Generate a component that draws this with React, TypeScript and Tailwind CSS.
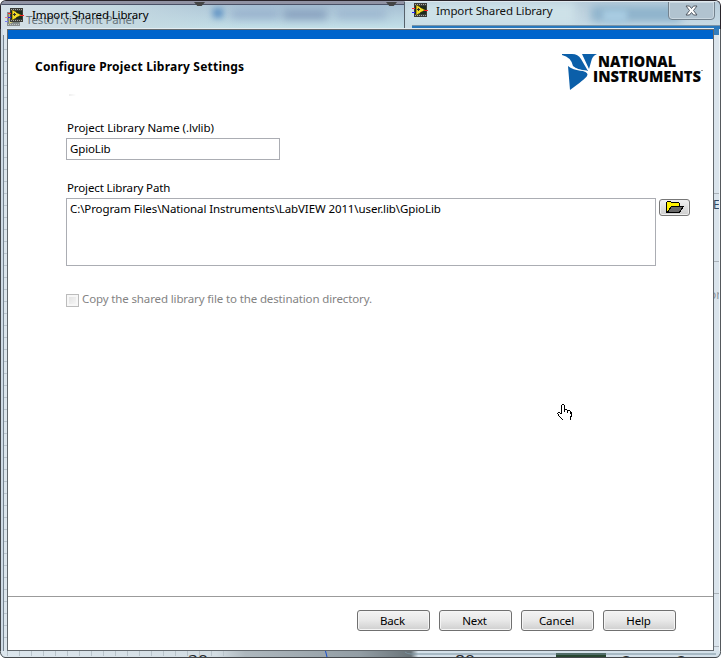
import type { ReactNode } from "react";

const font = "font-['Noto_Sans','Open_Sans',sans-serif] text-[11.5px] leading-4 tracking-[-0.13px]";

function LabviewIcon({ className = "" }: { className?: string }) {
  return (
    <svg className={className} width="17" height="16" viewBox="0 0 17 16" shapeRendering="crispEdges">
      <rect x="3" y="1" width="13" height="14" fill="#3c3c38" />
      <path d="M4 2.5H16M4 13.5H16" stroke="#a9aba4" strokeDasharray="1 1" />
      <rect x="4" y="4" width="11" height="8" fill="#1d2c1d" />
      <path d="M5 3V13L14 8Z" fill="#f0dc2a" stroke="#8d7500" strokeWidth=".6" />
      <path d="M1 6.5H4M13 8.5H17" stroke="#f22" />
      <path d="M1 10.5H4" stroke="#22f" />
      <path d="M6 7.5H9M7.5 6V9" stroke="#333" />
    </svg>
  );
}

function Logo() {
  return (
    <svg className="absolute left-[561px] top-[52px]" width="144" height="40" viewBox="0 0 144 40">
      <g fill="#0b5fa9">
        <path d="M1 2H11Q17 2 20 7L27 19Q16 18 12 14Q10 5 1 3Z" />
        <path d="M7 14Q11 18 22 19Q28 21 26 24Q24 27 9 38Z" />
        <path d="M21 2H36Q31 4 30 10L28 17Z" />
      </g>
      <path d="M10 14Q14 18 26 19" stroke="#fff" strokeWidth=".7" fill="none" />
      <g fill="#050505" fontFamily="'Open Sans', 'Noto Sans', sans-serif" fontWeight="800" fontSize="16.5" letterSpacing="0">
        <text x="37" y="15" textLength="78" lengthAdjust="spacingAndGlyphs">NATIONAL</text>
        <text x="32" y="29.5" textLength="108" lengthAdjust="spacingAndGlyphs">INSTRUMENTS</text>
      </g>
      <rect x="140" y="18" width="2" height="1" fill="#999" />
    </svg>
  );
}

function FolderIcon() {
  return (
    <svg width="20" height="13" viewBox="0 0 20 13" shapeRendering="crispEdges">
      <path d="M1 1H6V2H14V5H6L2 12H1Z" fill="#fff200" />
      <path d="M1.5 1V12M2 .5H6M6.5 1V2M7 1.5H14M14.5 2V5" stroke="#000" fill="none" />
      <path d="M6 5H19L15 12H2Z" fill="#696969" />
      <path d="M6 5.5H19M18 6L14 12M6 6L2 12M2 11.5H15" stroke="#000" fill="none" />
    </svg>
  );
}

function DialogButton({ children }: { children: ReactNode }) {
  return (
    <button className="flex h-[21px] w-[73px] items-center justify-center rounded-[3px] border border-[#707070] bg-linear-to-b from-[#f3f3f3] from-0% via-[#e8e8e8] via-50% to-[#cfcfcf] pr-[2px] pt-px shadow-[inset_0_0_0_1px_#f5f5f5]">
      {children}
    </button>
  );
}

function TitleBar() {
  return (
    <header className="relative h-[29px] overflow-hidden rounded-t-[6px] border-x border-t border-[#29242a] bg-linear-to-b from-[#a2bad0] to-[#c4e1e9]">
      <div className="absolute inset-x-0 bottom-0 top-[4px] bg-linear-to-r from-[#d5e0e7] via-[#c5d9e1] via-15% to-transparent to-35%" />
      <div className="absolute left-[212px] top-[7px] h-[10px] w-[10px] bg-[#5f93c4] blur-[3px]" />
      <div className="absolute left-[230px] top-[9px] h-[8px] w-[48px] bg-[#94aecb] blur-[4px]" />
      <div className="absolute left-[282px] top-[9px] h-[9px] w-[44px] bg-[#839cbb] blur-[4px]" />
      <div className="absolute left-[335px] top-[9px] h-[8px] w-[50px] bg-[#9ab4ce] blur-[4px]" />
      <div className="absolute inset-x-0 top-0 h-[4px] border-b border-[#4a5166] bg-[#9193a4]" />
      <div className="absolute left-[193px] top-[1px] h-[4px] w-[11px] bg-[#444] [clip-path:polygon(0_0,100%_0,70%_100%,30%_100%)]" />
      <div className="absolute left-[385px] top-[1px] h-[4px] w-[11px] bg-[#444] [clip-path:polygon(0_0,100%_0,70%_100%,30%_100%)]" />
      <LabviewIcon className="absolute left-[3px] top-[10px] opacity-50" />
      <span className="absolute left-[25px] top-[11px] whitespace-nowrap text-[#68767d]">Test01.vi Front Panel</span>
      <LabviewIcon className="absolute left-[6px] top-[6px]" />
      <span className="absolute left-[31px] top-[6px] whitespace-nowrap text-black">Import Shared Library</span>

      <div className="absolute left-[403px] right-0 top-0 h-[28px] overflow-hidden border-l border-t border-l-[#56616b] border-t-[#dfe8ee] bg-linear-to-b from-[#b8ccda] to-[#c8dce6]">
        <div className="absolute left-0 top-0 h-6 w-[170px] bg-[#cde1e8] blur-[4px]" />
        <div className="absolute left-[186px] top-1 h-4 w-[90px] bg-[#8eb3cc] blur-[4px]" />
        <div className="absolute left-[198px] top-2 h-3 w-6 bg-[#a9cce2] blur-[3px]" />
        <div className="absolute bottom-0 left-[7px] right-0 h-[4px] border-t border-[#7d94a6] bg-[#2778bd]" />
        <LabviewIcon className="absolute left-[6px] top-0" />
        <span className="absolute left-[31px] top-[1px] whitespace-nowrap text-[#111]">Import Shared Library</span>
        <div className="absolute -top-px right-[5px] flex h-[19px] w-[47px] items-center justify-center rounded-b-[4px] border border-[#73828e] bg-[#b1c3d0] shadow-[inset_0_0_0_1px_#cbd8e1]">
          <svg width="13" height="11" viewBox="0 0 13 11">
            <path d="M1 1H4.5L6.5 3.5L8.5 1H12L8.5 5.5L12 10H8.5L6.5 7.5L4.5 10H1L4.5 5.5Z" fill="#fff" stroke="#505863" />
          </svg>
        </div>
      </div>
      <div className="absolute bottom-0 left-[6px] right-[6px] h-px bg-[#e3edf2]" />
    </header>
  );
}

function SideFrame() {
  return (
    <svg className="shrink-0" width="7" height="622" shapeRendering="crispEdges">
      <rect width="7" height="622" fill="#dce5ec" />
      <rect width="1" height="622" fill="#44474b" />
      <rect x="1" width="2" height="622" fill="#cfdbe6" />
      <rect x="3" y="6" width="1" height="616" fill="#75838f" />
      <path d="M5.5 20V620" stroke="#bcc6ce" strokeWidth="3" strokeDasharray="1 11" />
    </svg>
  );
}

function RightFrame() {
  return (
    <svg className="shrink-0" width="7" height="622">
      <rect width="7" height="622" fill="#dae4ec" />
      <rect width="7" height="6" fill="#347dbd" />
      <path d="M0 164.5H6M0 232.5H6M0 564.5H6M0 617.5H6" stroke="#aab2b9" />
      <text x="-1" y="180" fontSize="12" fill="#304964">EV</text>
      <text x="-5" y="270" fontSize="12" fill="#8b969e">or</text>
      <rect x="5" width="1" height="622" fill="#eef4f7" />
      <rect x="6" width="1" height="622" fill="#55595d" />
    </svg>
  );
}

function BottomFrame() {
  return (
    <svg className="block" width="721" height="7" viewBox="0 0 721 7">
      <defs>
        <linearGradient id="glass">
          <stop offset="0" stopColor="#dce6ed" />
          <stop offset=".3" stopColor="#d3dde3" />
          <stop offset=".34" stopColor="#aeb8be" />
          <stop offset=".5" stopColor="#929da4" />
          <stop offset=".57" stopColor="#697378" />
          <stop offset=".58" stopColor="#d4e1ea" />
          <stop offset="1" stopColor="#d4e1ea" />
        </linearGradient>
      </defs>
      <path d="M0 0H721V3Q720 7 716 7H5Q1 6 0 3Z" fill="url(#glass)" />
      <path d="M7 2.5H230" stroke="#b8c3ca" strokeWidth="5" strokeDasharray="1 11" />
      <path d="M325.5 0L327 6" stroke="#174ed0" />
      <rect x="556" y="2" width="50" height="4" fill="#274630" />
      <path d="M405 1Q407 3 411 3H716" stroke="#7b929f" fill="none" />
      <g fill="#272b2e" fontSize="15" letterSpacing="0">
        <text x="188" y="14" textLength="20" lengthAdjust="spacingAndGlyphs">20</text>
        <text x="455" y="14" textLength="20" lengthAdjust="spacingAndGlyphs">80</text>
        <text x="620" y="15">C</text>
        <text x="675" y="15">C</text>
      </g>
      <path d="M0 0Q1 6 5 6.5H716Q720 6 721 0" fill="none" stroke="#45494d" />
    </svg>
  );
}

function HandCursor() {
  return (
    <svg className="absolute left-[556px] top-[403px]" width="18" height="19" viewBox="0 0 18 19" shapeRendering="crispEdges">
      <path d="M6 2H8V8H10V9H12V10H14V11H15V15H14V17H7V15H5V13H3V10H5V11H6Z" fill="#fff" />
      <path d="M6 1H8V2H6ZM5 2H6V11H5ZM8 2H9V9H8ZM9 6H11V7H9ZM11 7H12V10H11ZM12 7H14V8H12ZM14 8H15V11H14ZM15 9H16V14H15ZM14 13H15V17H14ZM2 9H4V10H2ZM1 10H2V11H1ZM2 11H3V13H2ZM4 10H5V11H4ZM3 13H4V14H3ZM4 14H5V15H4ZM5 15H6V16H5ZM6 16H7V17H6Z" fill="#000" />
    </svg>
  );
}

export default function App() {
  return (
    <div className={`relative h-[658px] w-[721px] overflow-hidden bg-white text-black ${font}`}>
      <TitleBar />
      <div className="flex h-[622px]">
        <SideFrame />
        <main className="flex w-[707px] shrink-0 flex-col border border-[#62686d] bg-white">
          <div className="h-[9px] shrink-0 bg-[#0064cc]" />
          <div className="flex h-[557px] shrink-0 flex-col items-start pl-[58px]">
            <h1 className="-ml-[31px] mt-[19px] h-4 whitespace-nowrap text-[12px] font-bold leading-[18px] tracking-[0.21px]">Configure Project Library Settings</h1>
            <div className="ml-[3px] mt-[20px] h-[2px] w-[7px] bg-linear-to-r from-[#eeeeee] to-white" />
            <label className="ml-px mt-[24px] h-4 whitespace-nowrap tracking-[-0.05px]">Project Library Name (.lvlib)</label>
            <div className="mt-[2px] flex h-[22px] w-[214px] items-center border border-[#abadb3] pl-[3px]">GpioLib</div>
            <label className="ml-px mt-[20px] h-4 whitespace-nowrap tracking-[-0.13px]">Project Library Path</label>
            <div className="mt-[2px] flex gap-[3px]">
              <div className="h-[68px] w-[590px] whitespace-nowrap border border-[#abadb3] pl-[3px] pt-[2px] tracking-[-0.1px]">
                C:\Program Files\National Instruments\LabVIEW 2011\user.lib\GpioLib
              </div>
              <button className="mt-px flex h-[17px] w-[31px] items-center justify-center rounded-[3px] border border-[#777] bg-linear-to-b from-[#f2f2f2] to-[#cdcdcd] shadow-[inset_0_0_0_1px_#eee]">
                <FolderIcon />
              </button>
            </div>
            <div className="mt-[25px] flex h-4 items-start gap-[3px] text-[#838383]">
              <div className="mt-[3px] h-[13px] w-[13px] border border-[#bcbcbc] bg-linear-to-br from-[#dedede] to-[#fafafa] shadow-[inset_0_0_0_2px_#f7f7f7]" />
              <span className="whitespace-nowrap">Copy the shared library file to the destination directory.</span>
            </div>
          </div>
          <footer className="flex grow items-start gap-[9px] border-t border-[#9b9b9b] pl-[349px] pt-[13px]">
            <DialogButton>Back</DialogButton>
            <DialogButton>Next</DialogButton>
            <DialogButton>Cancel</DialogButton>
            <DialogButton>Help</DialogButton>
          </footer>
        </main>
        <RightFrame />
      </div>
      <BottomFrame />
      <Logo />
      <HandCursor />
    </div>
  );
}
